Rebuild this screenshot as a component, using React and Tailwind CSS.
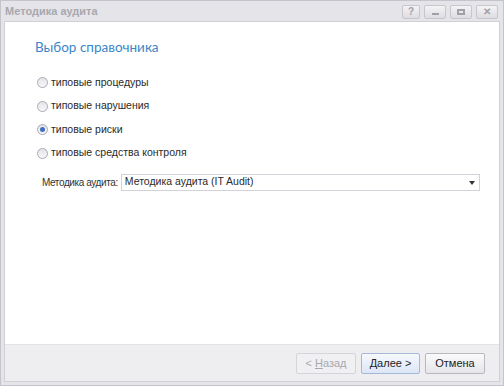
import React from "react";

const options = [
  "типовые процедуры",
  "типовые нарушения",
  "типовые риски",
  "типовые средства контроля",
];

const Radio = ({ checked }) => (
  <span className="relative flex h-[11px] w-[11px] items-center justify-center rounded-full border border-[#a9a9b0] bg-gradient-to-b from-[#e4e4e8] to-[#f8f8fa]">
    {checked && <span className="h-[5px] w-[5px] rounded-full bg-[#3f6fbf]" />}
  </span>
);

const TitleButton = ({ w, children }) => (
  <div
    className={`flex h-[14px] ${w} items-center justify-center rounded-[2px] border border-[#c6c6cc] bg-gradient-to-b from-[#f4f4f6] to-[#dcdce2] text-[10px] font-bold text-[#a0a0a6]`}
  >
    {children}
  </div>
);

export default function App() {
  return (
    <div
      className="flex h-[386px] w-[504px] flex-col border border-[#c4c4cc] bg-[#e4e4e9] text-[10.5px] text-[#2a2a2a]"
      style={{ fontFamily: "'Liberation Sans', Arial, sans-serif" }}
    >
      {/* title bar */}
      <div className="flex h-[20px] shrink-0 items-center justify-between pl-[4px] pr-[5px]">
        <span className="text-[11px] font-bold text-[#a8a8ae]">Методика аудита</span>
        <div className="flex items-center gap-[4px] pt-[1px]">
          <TitleButton w="w-[18px]">?</TitleButton>
          <TitleButton w="w-[22px]">
            <span className="mt-[5px] block h-[2px] w-[7px] bg-[#a0a0a6]" />
          </TitleButton>
          <TitleButton w="w-[22px]">
            <span className="block h-[6px] w-[8px] border-[2px] border-[#a0a0a6]" />
          </TitleButton>
          <TitleButton w="w-[22px]">✕</TitleButton>
        </div>
      </div>

      {/* body */}
      <div className="mx-[3px] mb-[3px] flex flex-1 flex-col border border-[#d0d0d6] bg-white">
        <div className="flex-1 pl-[30px] pr-[19px] pt-[16px]">
          <div
            className="text-[13.5px] leading-[18px] text-[#3b86c8]"
            style={{ fontFamily: "Lato, 'Liberation Sans', sans-serif" }}
          >
            Выбор справочника
          </div>
          <div className="mt-[20px] flex flex-col gap-[10.5px] pl-[2px]">
            {options.map((o, i) => (
              <label key={o} className="flex h-[13px] items-center gap-[3px]">
                <Radio checked={i === 2} />
                <span>{o}</span>
              </label>
            ))}
          </div>
          <div className="mt-[14px] flex items-center gap-[3px] pl-[7px]">
            <span className="shrink-0 whitespace-nowrap text-[10px] tracking-[-0.4px] text-[#333]">
              Методика аудита:
            </span>
            <div className="flex h-[17px] flex-1 items-center justify-between border border-[#d2d2d8] pl-[3px] pr-[4px]">
              <span>Методика аудита (IT Audit)</span>
              <span className="mt-[1px] h-0 w-0 border-x-[3px] border-t-[4px] border-x-transparent border-t-[#333]" />
            </div>
          </div>
        </div>

        {/* footer */}
        <div className="flex h-[37px] shrink-0 items-center justify-end gap-[5px] border-t border-[#e2e2e6] bg-[#eeeef1] pr-[14px]">
          <button className="h-[21px] w-[60px] rounded-[2px] border border-[#d4d4da] bg-[#f0f0f3] text-[11px] text-[#a8a8ae]">
            &lt; <u>Н</u>азад
          </button>
          <button className="h-[21px] w-[59px] rounded-[2px] border border-[#a6b8d8] bg-gradient-to-b from-[#f6f8fd] to-[#dde6f6] text-[11px] text-[#222]">
            <u>Д</u>алее &gt;
          </button>
          <button className="h-[21px] w-[60px] rounded-[2px] border border-[#b8b8c0] bg-gradient-to-b from-[#fafafb] to-[#e6e6ea] text-[11px] text-[#222]">
            Отмена
          </button>
        </div>
      </div>
    </div>
  );
}
